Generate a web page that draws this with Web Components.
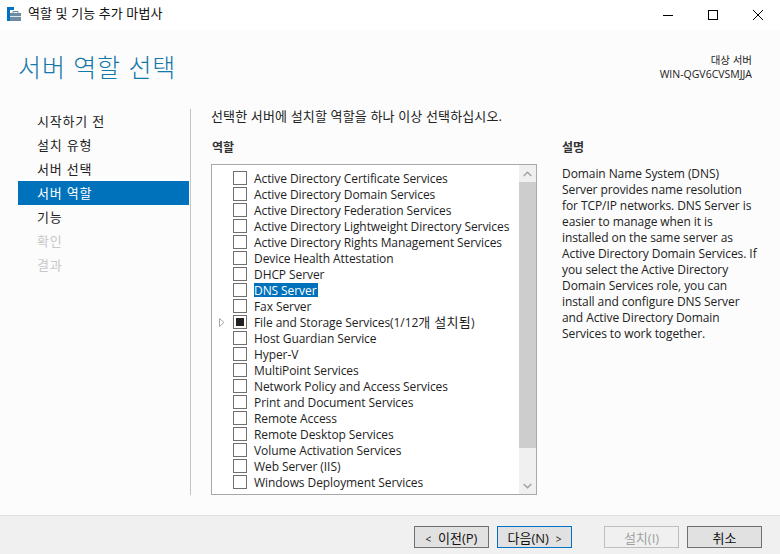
<!DOCTYPE html>
<html lang="ko">
<head>
<meta charset="utf-8">
<title>역할 및 기능 추가 마법사</title>
<style>
    html, body { margin: 0; padding: 0; }
    body {
        width: 780px;
        height: 554px;
        overflow: hidden;
        background: #fcfcfc;
        color: #1a1a1a;
        font: 12px "Open Sans", "Noto Sans CJK KR", sans-serif;
    }
</style>
</head>
<body>
<role-wizard></role-wizard>

<script>
const FONT = '"Open Sans", "Noto Sans CJK KR", sans-serif'

class WizardTitlebar extends HTMLElement {
    constructor() {
        super()
        this.attachShadow({ mode: 'open' })
        this.shadowRoot.innerHTML = `
            <style>
                :host { display: flex; align-items: center; height: 30px; background: #fff; padding-left: 7px; }
                svg { display: block; flex: none; }
                .icon { margin-top: -2px; }
                .name { margin-left: 7px; font-size: 13px; line-height: 28px; height: 30px; margin-top: -2px; color: #111; letter-spacing: .1px; flex: 1; }
                .btns { display: flex; }
                .btns div { width: 45px; height: 30px; display: flex; align-items: center; justify-content: center; }
            </style>
            <svg class="icon" width="14" height="14" viewBox="0 0 14 14">
                <rect x="0" y="0" width="7" height="3" fill="#0072c6"/>
                <rect x="0" y="3" width="3" height="11" fill="#0072c6"/>
                <rect x="3" y="6" width="11" height="8" fill="#6d8ca3"/>
                <path d="M6 6V4.5h5V6" fill="none" stroke="#6d8ca3" stroke-width="1"/>
                <rect x="3" y="9" width="11" height="1" fill="#dfe7ee"/>
            </svg>
            <span class="name"><slot></slot></span>
            <div class="btns">
                <div><svg width="10" height="10" viewBox="0 0 10 10"><path d="M0 5.5h10" stroke="#000"/></svg></div>
                <div><svg width="10" height="10" viewBox="0 0 10 10"><rect x=".5" y=".5" width="9" height="9" fill="none" stroke="#000"/></svg></div>
                <div><svg width="10" height="10" viewBox="0 0 10 10"><path d="M0 0L10 10M10 0L0 10" stroke="#000" stroke-width="1"/></svg></div>
            </div>
        `
    }
}

class WizardHeader extends HTMLElement {
    constructor() {
        super()
        this.attachShadow({ mode: 'open' })
        this.shadowRoot.innerHTML = `
            <style>
                :host { display: flex; justify-content: space-between; height: 79px; padding: 0 28px 0 18px; }
                h1 { margin: 18px 0 0; font-size: 25px; line-height: 38px; font-weight: 300; color: #1379a8; letter-spacing: .9px; }
                .target { margin-top: 23px; text-align: right; font-size: 10.5px; line-height: 14px; color: #222; }
            </style>
            <h1><slot name="title"></slot></h1>
            <div class="target"><slot name="target"></slot></div>
        `
    }
}

class WizardNav extends HTMLElement {
    constructor() {
        super()
        this.attachShadow({ mode: 'open' })
        const items = [
            ['시작하기 전', ''], ['설치 유형', ''], ['서버 선택', ''], ['서버 역할', 'on'],
            ['기능', ''], ['확인', 'off'], ['결과', 'off']
        ]
        this.shadowRoot.innerHTML = `
            <style>
                :host { display: block; width: 171px; margin-left: 18px; }
                div { height: 24px; line-height: 25px; padding-left: 19px; font-size: 13px; letter-spacing: .8px; color: #222; }
                .on { background: #0072bc; color: #fff; }
                .off { color: #c8c8c8; }
            </style>
            ${items.map(([t, c]) => `<div class="${c}">${t}</div>`).join('')}
        `
    }
}

class RoleRow extends HTMLElement {
    constructor() {
        super()
        this.attachShadow({ mode: 'open' })
        const partial = this.hasAttribute('partial')
        const expander = this.hasAttribute('expander')
        const sel = this.hasAttribute('selected')
        this.shadowRoot.innerHTML = `
            <style>
                :host { display: flex; align-items: center; height: 16px; }
                .exp { width: 21px; flex: none; display: flex; justify-content: center; padding-right: 2px; box-sizing: border-box; }
                .box { width: 14px; height: 14px; box-sizing: border-box; border: 1px solid #707070; background: #fff; flex: none; display: flex; align-items: center; justify-content: center; }
                .box i { display: block; width: 8px; height: 8px; background: #222; }
                .label { margin-left: 7px; padding-right: 1px; line-height: 16px; height: 14px; font-size: 12px; white-space: nowrap; color: #1e1e1e; letter-spacing: -.08px; }
                .sel { background: #0072bc; color: #fff; }
            </style>
            <div class="exp">${expander ? '<svg width="6" height="9" viewBox="0 0 6 9"><path d="M.5.5L5 4.5L.5 8.5Z" fill="#fff" stroke="#a6a6a6"/></svg>' : ''}</div>
            <div class="box">${partial ? '<i></i>' : ''}</div>
            <span class="label ${sel ? 'sel' : ''}"><slot></slot></span>
        `
    }
}

class RoleList extends HTMLElement {
    constructor() {
        super()
        this.attachShadow({ mode: 'open' })
        this.shadowRoot.innerHTML = `
            <style>
                :host { display: flex; width: 326px; height: 331px; box-sizing: border-box; border: 1px solid #a9a9a9; background: #fff; }
                .rows { flex: 1; padding-top: 5px; overflow: hidden; }
                .bar { width: 17px; flex: none; display: flex; flex-direction: column; background: #f0f0f0; }
                .arrow { height: 17px; display: flex; align-items: center; justify-content: center; flex: none; }
                .thumb { height: 266px; background: #cdcdcd; flex: none; }
                .rest { flex: 1; }
            </style>
            <div class="rows"><slot></slot></div>
            <div class="bar">
                <div class="arrow"><svg width="9" height="6" viewBox="0 0 9 6"><path d="M.7 5L4.5 1.2L8.3 5" fill="none" stroke="#a0a0a0" stroke-width="1.4"/></svg></div>
                <div class="thumb"></div>
                <div class="rest"></div>
                <div class="arrow"><svg width="9" height="6" viewBox="0 0 9 6"><path d="M.7 1L4.5 4.8L8.3 1" fill="none" stroke="#a0a0a0" stroke-width="1.4"/></svg></div>
            </div>
        `
    }
}

class WizardButton extends HTMLElement {
    constructor() {
        super()
        this.attachShadow({ mode: 'open' })
        this.shadowRoot.innerHTML = `
            <style>
                :host { display: flex; align-items: center; justify-content: center; width: 75px; height: 22px; box-sizing: border-box; border: 1px solid #707070; background: #e1e1e1; font-size: 13px; color: #111; white-space: nowrap; }
                :host([focused]) { border-color: #0072c6; }
                :host([disabled]) { border-color: #bfbfbf; background: #f0f0f0; color: #a0a0a0; }
            </style>
            <slot></slot>
        `
    }
}

class WizardFooter extends HTMLElement {
    constructor() {
        super()
        this.attachShadow({ mode: 'open' })
        this.shadowRoot.innerHTML = `
            <style>
                :host { display: flex; align-items: center; height: 39px; box-sizing: border-box; padding: 4px 0 0 414px; gap: 8px; background: #f0f0f0; border-top: 1px solid #dfdfdf; }
            </style>
            <slot></slot>
        `
    }
}

class RoleWizard extends HTMLElement {
    constructor() {
        super()
        this.attachShadow({ mode: 'open' })
        const roles = [
            'Active Directory Certificate Services', 'Active Directory Domain Services',
            'Active Directory Federation Services', 'Active Directory Lightweight Directory Services',
            'Active Directory Rights Management Services', 'Device Health Attestation', 'DHCP Server',
            'DNS Server', 'Fax Server', 'File and Storage Services(1/12<span class="ko">개 설치됨</span>)', 'Host Guardian Service',
            'Hyper-V', 'MultiPoint Services', 'Network Policy and Access Services',
            'Print and Document Services', 'Remote Access', 'Remote Desktop Services',
            'Volume Activation Services', 'Web Server (IIS)', 'Windows Deployment Services'
        ]
        const rows = roles.map(r => {
            let attrs = ''
            if (r === 'DNS Server') attrs = 'selected'
            if (r.startsWith('File and')) attrs = 'partial expander'
            return `<role-row ${attrs}>${r}</role-row>`
        }).join('')

        this.shadowRoot.innerHTML = `
            <style>
                :host { display: flex; flex-direction: column; height: 554px; font-family: ${FONT}; }
                .main { flex: 1; display: flex; }
                .nav-col { width: 190px; flex: none; }
                .pane { width: 590px; box-sizing: border-box; }
                .pane-in { height: 386px; border-left: 1px solid #c4c4c4; padding-left: 20px; }
                .intro { font-size: 13px; line-height: 14px; color: #222; letter-spacing: .15px; }
                .cols { display: flex; margin-top: 16px; }
                .left { width: 326px; flex: none; }
                .right { margin-left: 25px; width: 196px; }
                h2 { margin: 0; font-size: 12px; line-height: 18px; font-weight: 700; color: #333; }
                .left h2 { margin-left: 1px; height: 25px; }
                .right h2 { height: 27px; }
                .desc { font-size: 12px; line-height: 16px; color: #222; letter-spacing: -.08px; white-space: nowrap; }
                .spacer { width: 16px; }
                .ko { font-size: 13px; letter-spacing: .3px; line-height: 0; }
                .ang { font-size: 10px; }
            </style>
            <wizard-titlebar>역할 및 기능 추가 마법사</wizard-titlebar>
            <wizard-header>
                <span slot="title">서버 역할 선택</span>
                <span slot="target">대상 서버<br>WIN-QGV6CVSMJJA</span>
            </wizard-header>
            <div class="main">
                <div class="nav-col"><wizard-nav></wizard-nav></div>
                <div class="pane">
                    <div class="pane-in">
                        <div class="intro">선택한 서버에 설치할 역할을 하나 이상 선택하십시오.</div>
                        <div class="cols">
                            <div class="left">
                                <h2>역할</h2>
                                <role-list>${rows}</role-list>
                            </div>
                            <div class="right">
                                <h2>설명</h2>
                                <div class="desc">Domain Name System (DNS)<br>Server provides name resolution<br>for TCP/IP networks. DNS Server is<br>easier to manage when it is<br>installed on the same server as<br>Active Directory Domain Services. If<br>you select the Active Directory<br>Domain Services role, you can<br>install and configure DNS Server<br>and Active Directory Domain<br>Services to work together.</div>
                            </div>
                        </div>
                    </div>
                </div>
            </div>
            <wizard-footer>
                <wizard-button><span><span class="ang">&lt;</span>&nbsp; 이전(P)</span></wizard-button>
                <wizard-button focused><span>다음(N) &nbsp;<span class="ang">&gt;</span></span></wizard-button>
                <div class="spacer"></div>
                <wizard-button disabled>설치(I)</wizard-button>
                <wizard-button>취소</wizard-button>
            </wizard-footer>
        `
    }
}

customElements.define('wizard-titlebar', WizardTitlebar)
customElements.define('wizard-header', WizardHeader)
customElements.define('wizard-nav', WizardNav)
customElements.define('role-row', RoleRow)
customElements.define('role-list', RoleList)
customElements.define('wizard-button', WizardButton)
customElements.define('wizard-footer', WizardFooter)
customElements.define('role-wizard', RoleWizard)
</script>
</body>
</html>
